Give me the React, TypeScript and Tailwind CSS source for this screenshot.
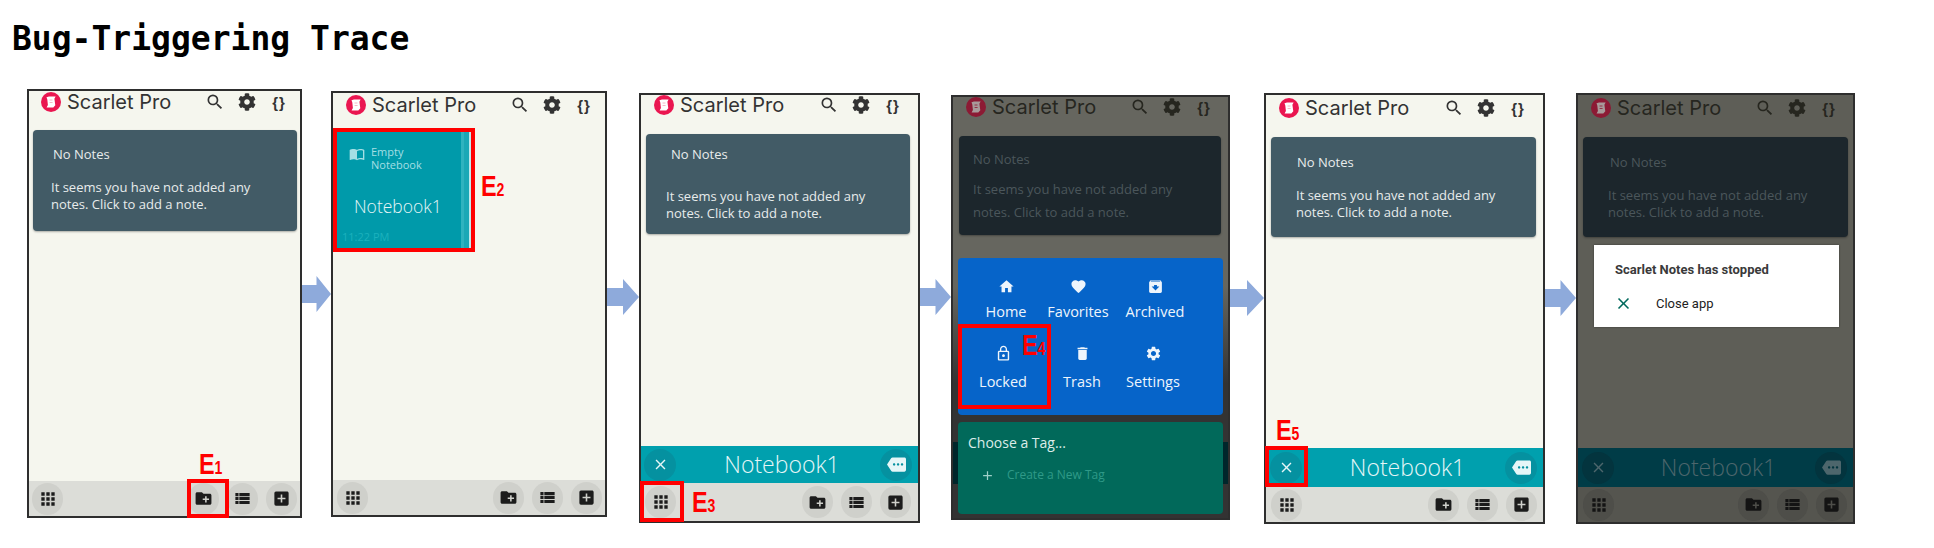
import React from 'react';
import { FaCog } from 'react-icons/fa';
import {
  MdAdd,
  MdAddBox,
  MdApps,
  MdArchive,
  MdClose,
  MdCreateNewFolder,
  MdDelete,
  MdFavorite,
  MdHome,
  MdImportContacts,
  MdLockOutline,
  MdMore,
  MdSearch,
  MdSettings,
  MdViewList,
} from 'react-icons/md';

const sans = 'font-["Open_Sans",sans-serif]';

const Logo: React.FC<{ dim?: boolean }> = ({ dim }) => (
  <svg width="20" height="20" viewBox="0 0 20 20" className="shrink-0">
    <circle cx="10" cy="10" r="10" fill={dim ? '#8c1a34' : '#ea1650'} />
    <path d="M5.5 5.2 8 4.4h6.6l-1.2 2.4.9 6.4-2 2.4H5.6l1.3-2.6-.6-5.6z" fill={dim ? '#a89a9a' : '#ffffff'} />
    <path d="M8.5 8h3M8.6 10.5h3" stroke={dim ? '#8c1a34' : '#f4a3b8'} strokeWidth="0.8" />
  </svg>
);

const Header: React.FC<{ className: string; dim?: boolean }> = ({ className, dim }) => (
  <div className={`flex shrink-0 items-center ${dim ? 'text-[#26261f]' : 'text-[#333333]'} ${className}`}>
    <Logo dim={dim} />
    <span className='ml-[6px] font-["Inter",sans-serif] text-[20px] font-normal leading-none'>Scarlet Pro</span>
    <div className="ml-auto flex items-center">
      <span className="flex w-[32px] justify-center"><MdSearch size={20} /></span>
      <span className="flex w-[32px] justify-center"><FaCog size={18} /></span>
      <span className='flex w-[32px] justify-center font-["Liberation_Sans",sans-serif] text-[15px] font-bold leading-none tracking-[1px]'>{'{}'}</span>
    </div>
  </div>
);

const NoNotes: React.FC<{
  className: string;
  titleClass: string;
  bodyClass: string;
  dim?: boolean;
}> = ({ className, titleClass, bodyClass, dim }) => (
  <div
    className={`${sans} shrink-0 rounded-[4px] text-[13px] shadow-[0_1px_2px_rgba(0,0,0,0.3)] ${
      dim ? 'bg-[#1c262c] text-[#4b565b]' : 'bg-[#425b66] text-[#e8ecec]'
    } ${className}`}
  >
    <p className={`leading-[18px] ${titleClass}`}>No Notes</p>
    <p className={bodyClass}>
      It seems you have not added any
      <br />
      notes. Click to add a note.
    </p>
  </div>
);

const RoundButton: React.FC<{ dim?: boolean; children: React.ReactNode }> = ({ dim, children }) => (
  <span
    className={`flex h-[32px] w-[31px] items-center justify-center rounded-full ${
      dim ? 'bg-[#4e4e49] text-[#141414]' : 'bg-[#cfd0cb] text-[#1c1c1c]'
    }`}
  >
    {children}
  </span>
);

const BottomBar: React.FC<{ className: string; dim?: boolean }> = ({ className, dim }) => (
  <div className={`flex shrink-0 items-center ${dim ? 'bg-[#55554f]' : 'bg-[#dcddd8]'} ${className}`}>
    <RoundButton dim={dim}><MdApps size={20} /></RoundButton>
    <div className="ml-auto flex gap-[8px]">
      <RoundButton dim={dim}><MdCreateNewFolder size={19} /></RoundButton>
      <RoundButton dim={dim}><MdViewList size={19} /></RoundButton>
      <RoundButton dim={dim}><MdAddBox size={19} /></RoundButton>
    </div>
  </div>
);

const NotebookBar: React.FC<{ className: string; dim?: boolean }> = ({ className, dim }) => (
  <div
    className={`flex shrink-0 items-center ${
      dim ? 'bg-[#003c47] text-[#4d666c]' : 'bg-[#00a0ae] text-[#e6f6f7]'
    } ${className}`}
  >
    <span className={`flex h-[32px] w-[32px] items-center justify-center rounded-full ${dim ? 'bg-[#03343e]' : 'bg-[#0591a0]'}`}>
      <MdClose size={17} />
    </span>
    <span className={`${sans} flex-1 pl-[8px] text-center text-[23px] font-light leading-none`}>Notebook1</span>
    <span className={`flex h-[32px] w-[32px] items-center justify-center rounded-full ${dim ? 'bg-[#03343e]' : 'bg-[#0591a0]'}`}>
      <MdMore size={19} />
    </span>
  </div>
);

const Phone: React.FC<{ className: string; children: React.ReactNode }> = ({ className, children }) => (
  <div className={`relative flex shrink-0 flex-col border-2 border-[#2e2e2e] ${className}`}>{children}</div>
);

const Arrow: React.FC<{ className: string }> = ({ className }) => (
  <div className={`shrink-0 ${className}`}>
    <svg width="100%" height="36" viewBox="0 0 28 36" preserveAspectRatio="none" className="block">
      <polygon points="0,9 14,9 14,0 28,18 14,36 14,27 0,27" fill="#8eaadb" />
    </svg>
  </div>
);

const Mark: React.FC<{ className: string; n: string }> = ({ className, n }) => (
  <div className={`absolute flex origin-left scale-x-[0.78] items-baseline font-["Liberation_Sans",sans-serif] font-bold leading-none text-[#ff0000] ${className}`}>
    <span className="text-[30px]">E</span>
    <span className="text-[18px]">{n}</span>
  </div>
);

const RedBox: React.FC<{ className: string }> = ({ className }) => (
  <div className={`absolute border-[4px] border-[#ff0000] ${className}`} />
);

const MenuItem: React.FC<{
  className: string;
  labelClass: string;
  icon: React.ReactNode;
  label: string;
}> = ({ className, labelClass, icon, label }) => (
  <div className={`flex flex-col items-center ${className}`}>
    <span className="flex h-[18px] items-center">{icon}</span>
    <span className={`text-[14.5px] leading-[20px] ${labelClass}`}>{label}</span>
  </div>
);

export default function App() {
  return (
    <div className="h-[548px] w-[1934px] overflow-hidden bg-white">
      <h1 className='h-[89px] pl-[12px] pt-[19px] font-["DejaVu_Sans_Mono",monospace] text-[33px] font-bold leading-[40px] text-black'>
        Bug-Triggering Trace
      </h1>

      <div className="flex items-start pl-[27px]">
        {/* step 1 */}
        <Phone className="h-[429px] w-[275px] bg-[#f5f6ee]">
          <Header className="h-[22px] pl-[12px] pr-[5px]" />
          <NoNotes
            className="ml-[4px] mr-[3px] mt-[17px] h-[101px]"
            titleClass="pl-[20px] pt-[15px]"
            bodyClass="mt-[16px] pl-[18px] leading-[17px]"
          />
          <div className="flex-1" />
          <BottomBar className="h-[35px] pl-[3px] pr-[3px]" />
          <RedBox className="left-[158px] top-[388px] h-[39px] w-[42px]" />
          <Mark className="left-[170px] top-[358px]" n="1" />
        </Phone>

        <Arrow className="mt-[187px] w-[29px]" />

        {/* step 2 */}
        <Phone className="mt-[2px] h-[426px] w-[276px] bg-[#f5f6ee]">
          <Header className="h-[24px] pl-[13px] pr-[5px]" />
          <div className={`${sans} mt-[11px] flex h-[124px] w-[142px] shrink-0 border-[4px] border-[#ff0000] bg-[#009aaa]`}>
            <div className="flex flex-1 flex-col">
              <div className="flex pl-[12px] pt-[13px] text-[#a4dfe4]">
                <MdImportContacts size={16} className="mt-[1px]" />
                <span className="ml-[6px] text-[11px] leading-[13px]">
                  Empty
                  <br />
                  Notebook
                </span>
              </div>
              <span className="mt-[22px] pl-[17px] text-[17.5px] font-light leading-[26px] text-[#e6f6f7]">Notebook1</span>
              <span className="mt-[11px] pl-[5px] text-[11px] leading-[14px] text-[#1cb1bd]">11:22 PM</span>
            </div>
            <div className="w-[3px] bg-[#2fb3bf]" />
            <div className="w-[5px] bg-[#1aa8b6]" />
            <div className="w-[2px] bg-[#bfe8ec]" />
          </div>
          <div className="flex-1" />
          <BottomBar className="h-[35px] pl-[4px] pr-[3px]" />
          <Mark className="left-[148px] top-[78px]" n="2" />
        </Phone>

        <Arrow className="mt-[190px] w-[32px]" />

        {/* step 3 */}
        <Phone className="mt-[4px] h-[430px] w-[281px] bg-[#f5f6ee]">
          <Header className="h-[20px] pl-[13px] pr-[9px]" />
          <NoNotes
            className="ml-[5px] mr-[8px] mt-[19px] h-[100px]"
            titleClass="pl-[25px] pt-[11px]"
            bodyClass="mt-[25px] pl-[20px] leading-[17px]"
          />
          <div className="flex-1" />
          <NotebookBar className="h-[37px] pl-[3px] pr-[6px]" />
          <BottomBar className="h-[38px] pl-[4px] pr-[7px]" />
          <RedBox className="left-[-1px] top-[386px] h-[41px] w-[44px]" />
          <Mark className="left-[51px] top-[392px]" n="3" />
        </Phone>

        <Arrow className="mt-[190px] w-[31px]" />

        {/* step 4 */}
        <Phone className="mt-[6px] h-[425px] w-[279px] bg-[linear-gradient(#66665f_0%,#66665f_45%,#333333_68%,#333333_82%,#00262b_82%,#00262b_92%,#333333_92%)]">
          <Header className="h-[20px] pl-[13px] pr-[8px]" dim />
          <NoNotes
            className="ml-[6px] mr-[7px] mt-[19px] h-[99px]"
            titleClass="pl-[14px] pt-[14px]"
            bodyClass="mt-[10px] pl-[14px] leading-[23px]"
            dim
          />
          <div className={`${sans} ml-[5px] mt-[23px] h-[157px] w-[265px] shrink-0 rounded-[4px] bg-[#0664c9] pt-[19px] text-[#eef5fc]`}>
            <div className="flex">
              <MenuItem className="w-[96px]" labelClass="mt-[7px]" icon={<MdHome size={17} />} label="Home" />
              <MenuItem className="w-[48px]" labelClass="mt-[7px]" icon={<MdFavorite size={17} />} label="Favorites" />
              <MenuItem className="w-[106px]" labelClass="mt-[7px]" icon={<MdArchive size={17} />} label="Archived" />
            </div>
            <div className="mt-[22px] flex">
              <MenuItem className="w-[90px]" labelClass="mt-[10px]" icon={<MdLockOutline size={17} />} label="Locked" />
              <MenuItem className="w-[68px]" labelClass="mt-[10px]" icon={<MdDelete size={17} />} label="Trash" />
              <MenuItem className="w-[74px]" labelClass="mt-[10px]" icon={<MdSettings size={17} />} label="Settings" />
            </div>
          </div>
          <div className={`${sans} ml-[5px] mt-[7px] h-[92px] w-[265px] shrink-0 rounded-[4px] bg-[#01695a]`}>
            <p className="pl-[10px] pt-[11px] text-[14px] leading-[20px] text-[#dcece9]">Choose a Tag...</p>
            <div className="mt-[12px] flex items-center pl-[22px] text-[#2f9a88]">
              <MdAdd size={15} className="text-[#9fd0c8]" />
              <span className="ml-[12px] text-[12px] leading-[20px]">Create a New Tag</span>
            </div>
          </div>
          <RedBox className="left-[5px] top-[227px] h-[85px] w-[93px]" />
          <Mark className="left-[69px] top-[233px]" n="4" />
        </Phone>

        <Arrow className="mt-[191px] w-[34px]" />

        {/* step 5 */}
        <Phone className="mt-[4px] h-[431px] w-[281px] bg-[#f5f6ee]">
          <Header className="h-[26px] pl-[13px] pr-[9px]" />
          <NoNotes
            className="ml-[5px] mr-[7px] mt-[16px] h-[100px]"
            titleClass="pl-[26px] pt-[16px]"
            bodyClass="mt-[16px] pl-[25px] leading-[17px]"
          />
          <div className="flex-1" />
          <NotebookBar className="h-[39px] pl-[4px] pr-[6px]" />
          <BottomBar className="h-[35px] pl-[5px] pr-[6px]" />
          <RedBox className="left-[-1px] top-[351px] h-[41px] w-[43px]" />
          <Mark className="left-[10px] top-[320px]" n="5" />
        </Phone>

        <Arrow className="mt-[191px] w-[31px]" />

        {/* step 6 */}
        <Phone className="mt-[4px] h-[431px] w-[279px] bg-[#5e5e57]">
          <Header className="h-[26px] pl-[13px] pr-[8px]" dim />
          <NoNotes
            className="ml-[5px] mr-[5px] mt-[16px] h-[100px]"
            titleClass="pl-[27px] pt-[16px]"
            bodyClass="mt-[16px] pl-[25px] leading-[17px]"
            dim
          />
          <div className='ml-[16px] mt-[8px] h-[82px] w-[245px] shrink-0 bg-white font-["Roboto",sans-serif] text-[13px] shadow-[0_0_2px_rgba(0,0,0,0.4)]'>
            <p className="pl-[21px] pt-[16px] font-bold leading-[18px] text-[#3a3a3a]">Scarlet Notes has stopped</p>
            <div className="mt-[15px] flex items-center pl-[20px]">
              <MdClose size={19} className="text-[#00695c]" />
              <span className="ml-[23px] leading-[18px] text-[#222222]">Close app</span>
            </div>
          </div>
          <div className="flex-1" />
          <NotebookBar className="h-[39px] pl-[4px] pr-[6px]" dim />
          <BottomBar className="h-[35px] pl-[5px] pr-[6px]" dim />
        </Phone>
      </div>
    </div>
  );
}
